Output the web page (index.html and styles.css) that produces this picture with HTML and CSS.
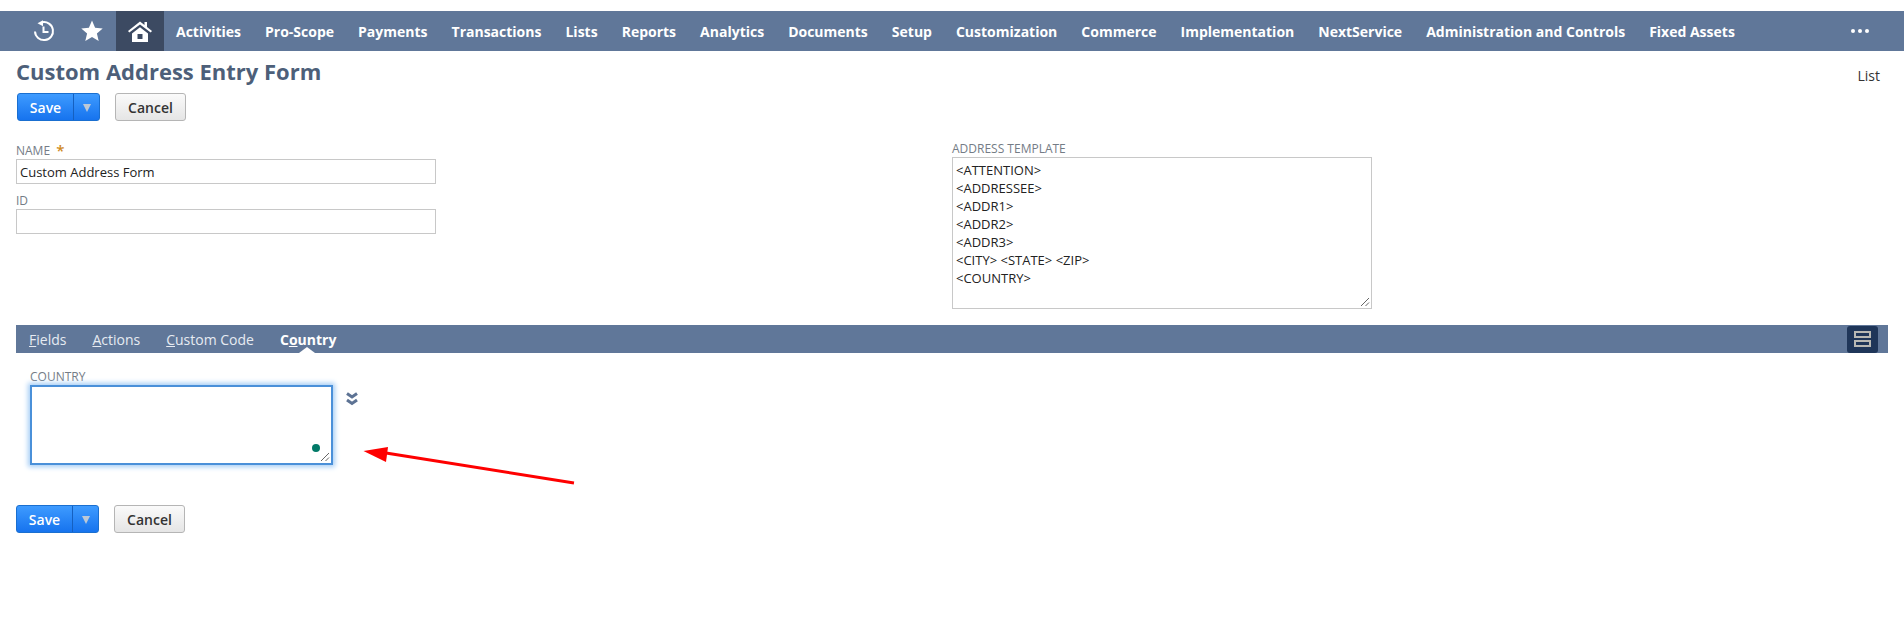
FILE: index.html
```html
<!DOCTYPE html>
<html lang="en">
<head>
<meta charset="utf-8">
<title>Custom Address Entry Form</title>
<link rel="stylesheet" href="styles.css">
</head>
<body>
<nav class="nav">
  <div class="nav-icons">
    <span class="nav-icon">
      <svg width="22" height="22" viewBox="0 0 22 22" fill="none" stroke="#fff" stroke-width="2"><path d="M9 2.300A9 9 0 1 1 2 11.500"/><path d="M4.500 3.200 10 .3v6z" fill="#fff" stroke="none"/><path d="M10.500 6.500v5.500h5"/></svg>
    </span>
    <span class="nav-icon">
      <svg width="22" height="22" viewBox="0 0 22 22" fill="#fff"><path d="M11 .5l3.100 7.200 7.600.7-5.800 5 1.800 7.600L11 17l-6.700 4 1.800-7.600-5.800-5 7.600-.7z"/></svg>
    </span>
    <span class="nav-home">
      <svg width="26" height="24" viewBox="0 0 26 24"><path d="M1 12 13 2.500 17.500 6V3H20v5l5 4-1.300 1.600L13 5.400 2.300 13.600z" fill="#fff"/><path fill-rule="evenodd" d="M5 14.500 13 8.300l8 6.200V23H5zM10.500 15v5h5v-5z" fill="#fff"/></svg>
    </span>
  </div>
  <a class="nav-link">Activities</a>
  <a class="nav-link">Pro-Scope</a>
  <a class="nav-link">Payments</a>
  <a class="nav-link">Transactions</a>
  <a class="nav-link">Lists</a>
  <a class="nav-link">Reports</a>
  <a class="nav-link">Analytics</a>
  <a class="nav-link">Documents</a>
  <a class="nav-link">Setup</a>
  <a class="nav-link">Customization</a>
  <a class="nav-link">Commerce</a>
  <a class="nav-link">Implementation</a>
  <a class="nav-link">NextService</a>
  <a class="nav-link">Administration and Controls</a>
  <a class="nav-link">Fixed Assets</a>
  <span class="nav-more"><i></i><i></i><i></i></span>
</nav>

<header class="title-row">
  <h1 class="title">Custom Address Entry Form</h1>
  <a class="list-link">List</a>
</header>

<div class="btn-row">
  <div class="save-btn"><span class="save-main">Save</span><span class="save-drop"><i></i></span></div>
  <button class="cancel-btn" type="button">Cancel</button>
</div>

<section class="fields">
  <div class="col-left">
    <label class="label label-name">NAME <span class="req">*</span></label>
    <div class="input">Custom Address Form</div>
    <label class="label label-id">ID</label>
    <div class="input"></div>
  </div>
  <div class="col-right">
    <label class="label">ADDRESS TEMPLATE</label>
    <div class="area template"><div>&lt;ATTENTION&gt;</div><div>&lt;ADDRESSEE&gt;</div><div>&lt;ADDR1&gt;</div><div>&lt;ADDR2&gt;</div><div>&lt;ADDR3&gt;</div><div>&lt;CITY&gt; &lt;STATE&gt; &lt;ZIP&gt;</div><div>&lt;COUNTRY&gt;</div>
      <svg class="grip" width="10" height="10" viewBox="0 0 10 10" stroke="#666" stroke-width="1"><path d="M1 9 9 1M5.500 9 9 5.500"/></svg>
    </div>
  </div>
</section>

<div class="tabs">
  <a class="tab"><u>F</u>ields</a>
  <a class="tab"><u>A</u>ctions</a>
  <a class="tab"><u>C</u>ustom Code</a>
  <a class="tab tab-active">C<u>o</u>untry</a>
  <span class="tabs-toggle"><i></i><i></i></span>
</div>

<section class="country">
  <label class="label">COUNTRY</label>
  <div class="country-row">
    <div class="area focus">
      <span class="dot"></span>
      <svg class="grip" width="10" height="10" viewBox="0 0 10 10" stroke="#666" stroke-width="1"><path d="M1 9 9 1M5.500 9 9 5.500"/></svg>
    </div>
    <svg class="chev" width="12" height="14" viewBox="0 0 12 14" fill="none" stroke="#5d7394" stroke-width="3"><path d="M1 1.500 6 5l5-3.500M1 8l5 3.500L11 8"/></svg>
  </div>
</section>

<div class="btn-row btn-row-bottom">
  <div class="save-btn"><span class="save-main">Save</span><span class="save-drop"><i></i></span></div>
  <button class="cancel-btn" type="button">Cancel</button>
</div>

<svg class="arrow" width="230" height="50" viewBox="0 0 230 50"><path d="M224 42 36 12" stroke="#fe0000" stroke-width="3" fill="none"/><path d="M13.500 10 38 6 36 21z" fill="#fe0000"/></svg>
</body>
</html>
```
FILE: styles.css
```css
* { box-sizing: border-box; }
html, body { margin: 0; padding: 0; }
body {
  background: #fff;
  color: #222;
  font-family: "Open Sans", "Liberation Sans", sans-serif;
  font-size: 13px;
  padding-top: 11px;
  position: relative;
  height: 628px;
  overflow: hidden;
}
.nav {
  display: flex;
  align-items: center;
  height: 40px;
  background: #607799;
  color: #fff;
}
.nav-icons { display: flex; align-items: center; height: 100%; padding-left: 33px; }
.nav-icon { display: flex; width: 22px; margin-right: 26px; justify-content: center; }
.nav-icon + .nav-icon { margin-right: 13px; }
.nav-home {
  display: flex;
  align-items: center;
  justify-content: center;
  width: 48px;
  height: 100%;
  background: #3c4a62;
}
.nav-link {
  font-size: 14px;
  font-weight: 700;
  padding: 0 12px;
  white-space: nowrap;
}
.nav-more { display: flex; gap: 3px; margin-left: auto; margin-right: 35px; }
.nav-more i { width: 4px; height: 4px; border-radius: 50%; background: #fff; }
.title-row {
  display: flex;
  justify-content: space-between;
  align-items: flex-start;
  padding: 7px 24px 0 16px;
  height: 42px;
}
.title {
  margin: 0;
  font-size: 22px;
  line-height: 27px;
  font-weight: 700;
  color: #4d5f79;
}
.list-link { font-size: 14px; line-height: 18px; margin-top: 9px; color: #333; }
.btn-row { display: flex; align-items: stretch; gap: 15px; height: 28px; margin-left: 17px; }
.btn-row-bottom { margin-left: 16px; margin-top: 40px; }
.save-btn {
  display: flex;
  width: 83px;
  border: 1px solid #1a6fd0;
  border-radius: 3px;
  background: linear-gradient(#3e9bff, #1673ee);
  color: #fff;
  font-size: 14px;
  font-weight: 600;
}
.save-main { display: flex; align-items: center; justify-content: center; width: 56px; border-right: 1px solid #1560c0; }
.save-drop { display: flex; align-items: center; justify-content: center; flex: 1; }
.save-drop i { width: 0; height: 0; border: 4.500px solid transparent; border-top: 8px solid #bcc8d6; border-bottom: 0; margin-top: 1px; }
.cancel-btn {
  width: 71px;
  padding: 0;
  border: 1px solid #b5b5b5;
  border-radius: 3px;
  background: linear-gradient(#fafafa, #e5e5e5);
  color: #333;
  font: 600 14px "Open Sans", "Liberation Sans", sans-serif;
}
.fields { display: flex; padding: 20px 0 0 16px; height: 204px; }
.col-left { width: 420px; margin-right: 516px; }
.col-right { width: 420px; }
.label {
  display: block;
  font-size: 12px;
  line-height: 16px;
  color: #747c86;
}
.label-name { height: 18px; padding-top: 2px; }
.label-id { margin-top: 7px; height: 18px; padding-top: 2px; }
.req { color: #d08a1c; font-size: 15px; font-weight: 600; margin-left: 3px; line-height: 14px; vertical-align: top; }
.input {
  height: 25px;
  border: 1px solid #c8c8c8;
  padding: 0 3px;
  font-size: 13px;
  line-height: 25px;
  color: #222;
}
.area { position: relative; border: 1px solid #c8c8c8; }
.template {
  height: 152px;
  padding: 3px 3px;
  font-size: 13px;
  line-height: 18px;
}
.grip { position: absolute; right: 1px; bottom: 1px; }
.tabs {
  display: flex;
  align-items: center;
  height: 28px;
  margin: 0 16px;
  background: #607799;
  color: #e6ebf2;
  font-size: 14px;
  padding-left: 1px;
  position: relative;
}
.tab { height: 28px; line-height: 28px; padding: 1px 12px 0; }
.tab + .tab { padding-left: 14px; }
.tab-active { color: #fff; font-weight: 700; position: relative; }
.tab-active::after {
  content: "";
  position: absolute;
  left: 50%;
  bottom: 0;
  margin-left: -8px;
  border: 8px solid transparent;
  border-top: 0;
  border-bottom: 6px solid #fff;
}
.tabs-toggle {
  display: flex;
  flex-direction: column;
  align-items: center;
  justify-content: center;
  gap: 2px;
  width: 31px;
  height: 27px;
  margin-left: auto;
  margin-right: 10px;
  border-radius: 3px;
  background: #1f3659;
}
.tabs-toggle i { width: 17px; height: 7px; border: 2px solid #b9b9b4; }
.country { padding: 16px 0 0 30px; }
.country .label { height: 16px; }
.country-row { display: flex; align-items: flex-start; }
.focus {
  width: 303px;
  height: 80px;
  border: 2px solid #4a90d9;
  box-shadow: 0 0 5px 2px #a5cdf5;
}
.dot { position: absolute; right: 11px; bottom: 11px; width: 8px; height: 8px; border-radius: 50%; background: #027a68; }
.chev { margin: 7px 0 0 13px; }
.arrow { position: absolute; left: 350px; top: 441px; }
```
